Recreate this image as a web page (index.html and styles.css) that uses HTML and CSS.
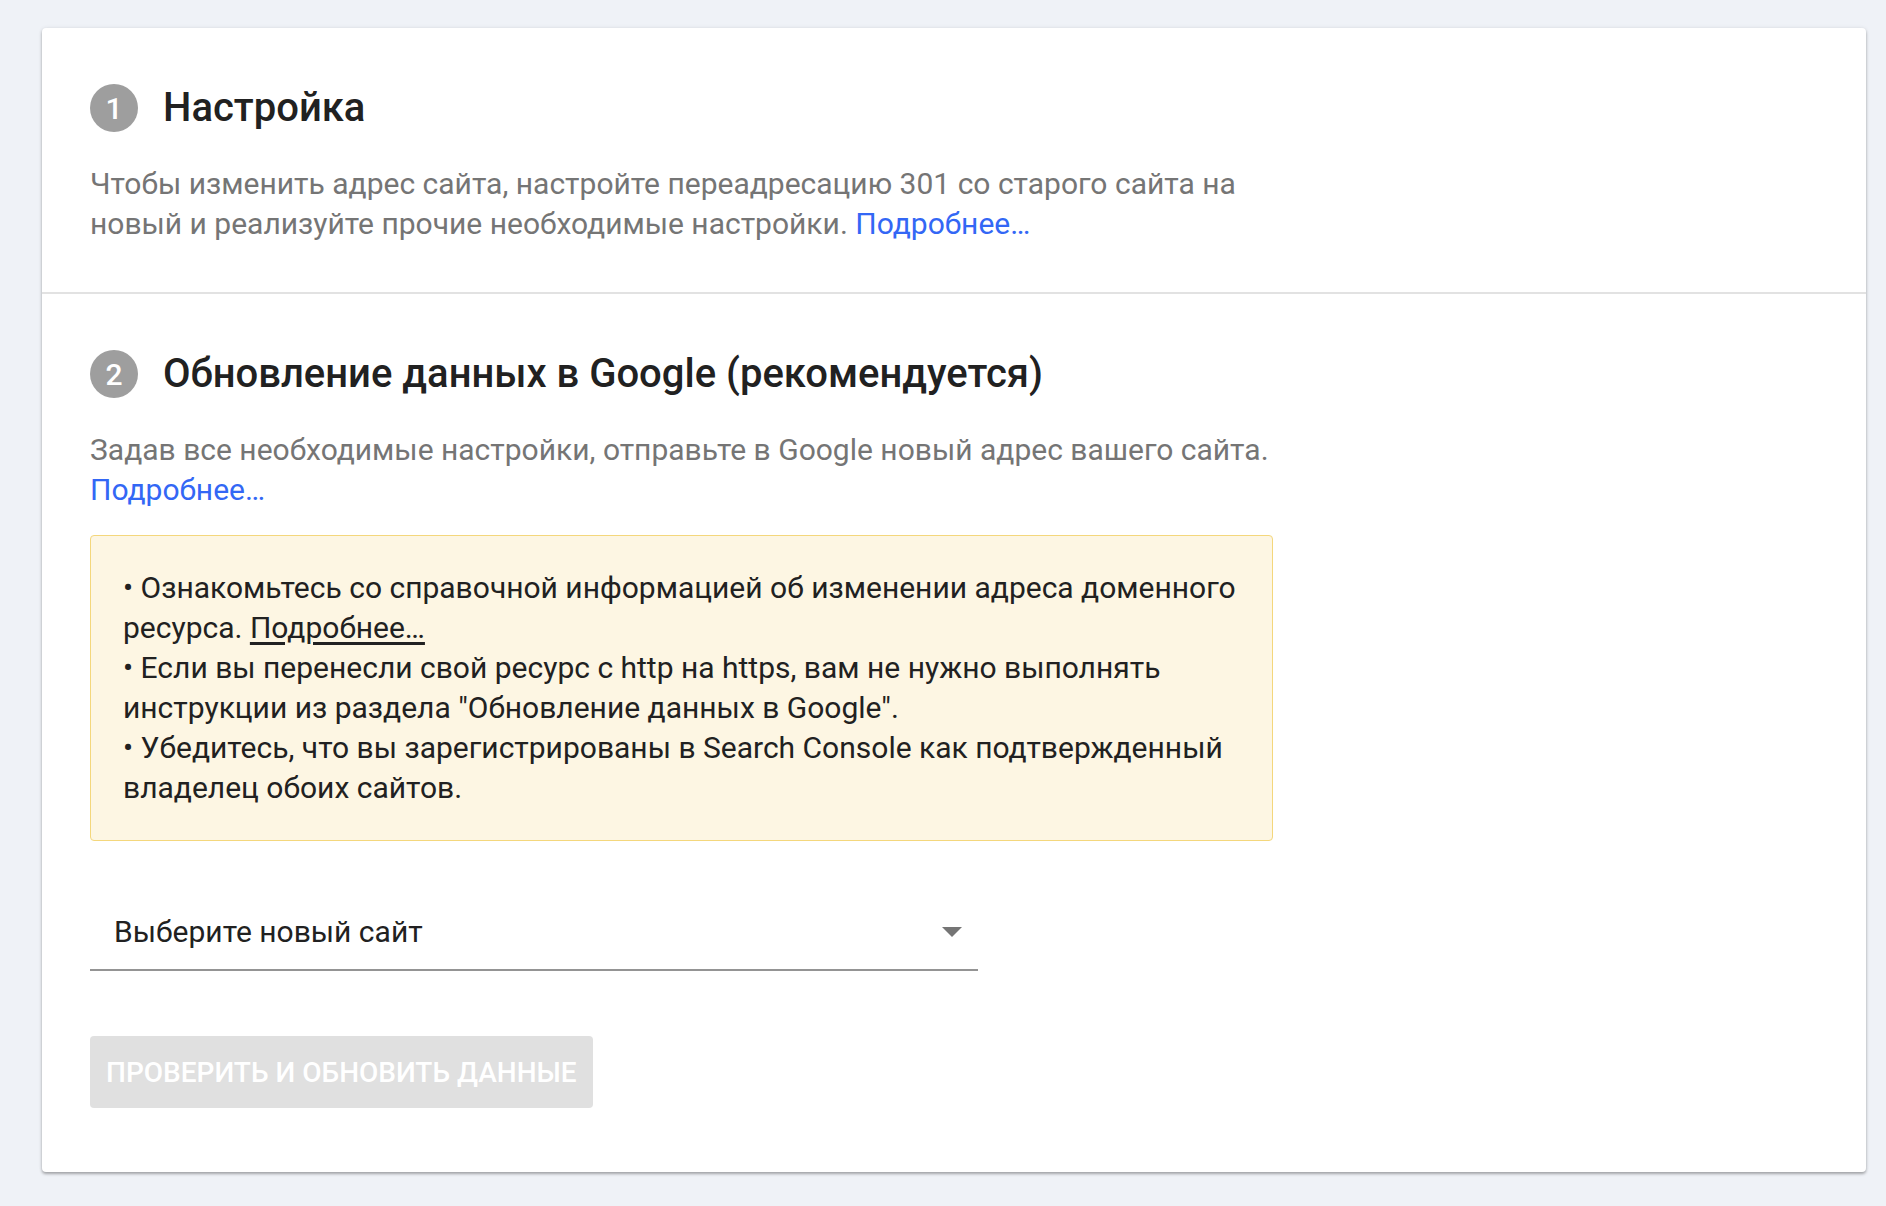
FILE: index.html
```html
<!DOCTYPE html>
<html lang="ru">
<head>
<meta charset="utf-8">
<title>Изменение адреса</title>
<link rel="stylesheet" href="styles.css">
</head>
<body>
<main class="card">
  <section class="step">
    <div class="step-head">
      <span class="num">1</span>
      <h2 class="title">Настройка</h2>
    </div>
    <p class="desc">Чтобы изменить адрес сайта, настройте переадресацию 301 со старого сайта на новый и реализуйте прочие необходимые настройки. <a class="link" href="#">Подробнее…</a></p>
  </section>
  <section class="step step-two">
    <div class="step-head">
      <span class="num">2</span>
      <h2 class="title">Обновление данных в Google (рекомендуется)</h2>
    </div>
    <p class="desc">Задав все необходимые настройки, отправьте в Google новый адрес вашего сайта. <a class="link" href="#">Подробнее…</a></p>
    <div class="notice">
      <div>• Ознакомьтесь со справочной информацией об изменении адреса доменного ресурса. <a class="notice-link" href="#">Подробнее…</a></div>
      <div>• Если вы перенесли свой ресурс с http на https, вам не нужно выполнять инструкции из раздела "Обновление данных в Google".</div>
      <div>• Убедитесь, что вы зарегистрированы в Search Console как подтвержденный владелец обоих сайтов.</div>
    </div>
    <div class="select">
      <span class="select-text">Выберите новый сайт</span>
      <svg class="select-arrow" width="20" height="10" viewBox="0 0 20 10"><path d="M0 0 L20 0 L10 10 Z" fill="#757575"/></svg>
    </div>
    <button class="btn" disabled>Проверить и обновить данные</button>
  </section>
</main>
</body>
</html>
```
FILE: styles.css
```css
html, body {
  margin: 0;
  padding: 0;
}
body {
  background: #eff2f7;
  font-family: Roboto, "Noto Sans", "Liberation Sans", sans-serif;
  padding: 28px 20px 34px 42px;
}
.card {
  width: 1824px;
  background: #ffffff;
  border-radius: 4px;
  box-shadow: 0 2px 3px rgba(0,0,0,0.3), 0 0 4px rgba(0,0,0,0.08);
}
.step {
  padding: 56px 48px 48px 48px;
}
.step + .step {
  border-top: 2px solid #e2e2e2;
}
.step-two {
  padding-bottom: 64px;
}
.step-head {
  display: flex;
  align-items: center;
  gap: 25px;
  height: 48px;
}
.num {
  width: 48px;
  height: 48px;
  border-radius: 50%;
  background: #9e9e9e;
  color: #ffffff;
  font-size: 30px;
  font-weight: 500;
  display: flex;
  align-items: center;
  justify-content: center;
  flex: none;
}
.title {
  margin: 0;
  font-size: 40px;
  font-weight: 500;
  color: #212121;
  line-height: 48px;
}
.desc {
  margin: 32px 0 0 0;
  width: 1190px;
  font-size: 30px;
  line-height: 40px;
  color: #757575;
}
.link {
  color: #3367f5;
  text-decoration: none;
}
.notice {
  margin-top: 25px;
  width: 1117px;
  padding: 32px;
  border: 1px solid #f4d77c;
  border-radius: 4px;
  background: #fdf6e3;
  font-size: 30px;
  line-height: 40px;
  color: #212121;
}
.notice-link {
  color: #212121;
  text-decoration: underline;
  text-underline-offset: 4px;
}
.select {
  margin-top: 48px;
  width: 848px;
  padding: 23px 16px 17px 24px;
  border-bottom: 2px solid #949494;
  display: flex;
  align-items: center;
  justify-content: space-between;
}
.select-text {
  font-size: 30px;
  line-height: 40px;
  color: #212121;
}
.btn {
  display: block;
  margin-top: 65px;
  height: 72px;
  padding: 0 16px;
  border: none;
  border-radius: 4px;
  background: #e0e0e0;
  color: #ffffff;
  font-family: Roboto, "Noto Sans", "Liberation Sans", sans-serif;
  font-size: 28px;
  font-weight: 500;
  text-transform: uppercase;
}
```
